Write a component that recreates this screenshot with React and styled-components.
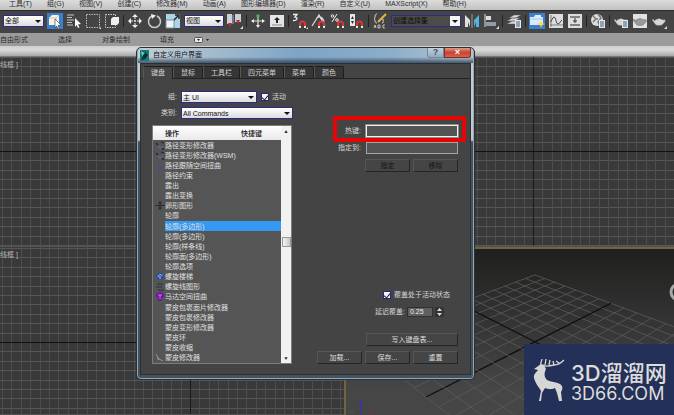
import { useState } from "react";
import styled, { createGlobalStyle, css } from "styled-components";

const GlobalStyle = createGlobalStyle`
  * {
    box-sizing: border-box;
  }
  body {
    margin: 0;
    overflow: hidden;
    background: #3a3a3a;
  }
  body, button, input, select {
    font-family: "Liberation Sans", "Noto Sans CJK SC", sans-serif;
    font-size: 7px;
    line-height: 10px;
  }
`;

const StyledApp = styled.div`
  position: relative;
  display: flex;
  flex-direction: column;
  height: 100vh;
  overflow: hidden;
`;

const MenuBar = styled.nav`
  display: flex;
  gap: 15px;
  height: 10px;
  padding-left: 9px;
  background: linear-gradient(#dcdcdc, #c2c2c2);
  a {
    color: #2c2c2c;
    line-height: 8px;
    text-decoration: none;
    white-space: nowrap;
  }
`;

const ToolBar = styled.div`
  display: flex;
  align-items: center;
  gap: 3px;
  height: 23px;
  padding: 0 3px 3px;
  background: #444;
  border-top: 1px solid #2c2c2c;
`;

const Separator = styled.span`
  width: 1px;
  height: 12px;
  background: #222;
`;

const ToolButton = styled.button`
  flex: none;
  display: flex;
  width: 16px;
  height: 16px;
  padding: 0;
  border: none;
  background: ${(props) => (props.$active ? "#3b7fd0" : "transparent")};
  svg {
    width: 16px;
    height: 16px;
  }
`;

const SelectBox = styled.span`
  position: relative;
  display: flex;
  flex: none;
  width: ${(props) => props.$width};
  height: 12px;
  &::after {
    content: "";
    position: absolute;
    right: 3px;
    top: 5px;
    border: 3px solid transparent;
    border-top-color: #111;
    border-bottom: none;
    pointer-events: none;
  }
  select {
    appearance: none;
    width: 100%;
    padding: 0 1px;
    border: 1px solid #2b2b8c;
    border-radius: 0;
    background: linear-gradient(#fff, #dcdcdc);
    color: #111;
    line-height: 9px;
  }
  ${(props) =>
    props.$dark &&
    css`
      select {
        background: linear-gradient(90deg, #4b4b4b 58px, #f4f4f4 58px);
        color: #0c0c0c;
      }
    `}
`;

const Ribbon = styled.div`
  display: flex;
  align-items: center;
  gap: 30px;
  height: 13px;
  background: #9b9b9b;
  color: #2b2b2b;
  white-space: nowrap;
  div {
    display: flex;
    align-items: center;
    gap: 20px;
  }
  svg {
    width: 16px;
    height: 6px;
  }
`;

const Strip = styled.div`
  height: 11px;
  background: linear-gradient(#cfcfcf, #dadada 40%, #a6a6a6);
  border-bottom: 1px solid #777;
`;

const Viewports = styled.main`
  flex: 1;
  display: grid;
  grid-template-columns: 51% 49%;
  grid-template-rows: 53% 47%;
  min-height: 0;
`;

const Viewport = styled.section`
  position: relative;
  overflow: hidden;
  color: #b5b5b5;
  background: #393939;
  border-bottom: 1px solid #525252;
  svg {
    display: block;
    width: 100%;
    height: 100%;
  }
  span {
    position: absolute;
    left: 0;
    top: 3px;
  }
`;

const Perspective = styled(Viewport)`
  border: 2px solid #6c6641;
  border-right: none;
  border-bottom: none;
  background: linear-gradient(#1f1f1d, #303030 35%, #464646 85%);
`;

const Dialog = styled.div`
  position: absolute;
  left: 136px;
  top: 47px;
  width: 339px;
  padding: 0 3px 4px;
  border: 1px solid #27313a;
  border-radius: 5px;
  background: linear-gradient(#c9ced1 0, #c4c7c9 92px, #46525c 94px, #46525c);
  box-shadow: inset 0 0 0 1px #93a6b3;
`;

const TitleBar = styled.header`
  display: flex;
  align-items: center;
  gap: 4px;
  height: 15px;
  margin: 0 -2px;
  padding: 0 2px 1px;
  border-radius: 4px 4px 0 0;
  background:
    linear-gradient(transparent 60%, rgba(25, 45, 68, 0.65) 95%),
    linear-gradient(90deg, #c3cdd5, #a5bbcd 22%, #7fa4c5 48%, #8cadc8 75%, #b8c5cf);
  h1 {
    flex: 1;
    margin: 0;
    color: #101010;
    font-size: 7px;
    font-weight: 400;
  }
  > svg {
    width: 9px;
    height: 11px;
  }
`;

const WindowButtons = styled.div`
  display: flex;
  align-self: flex-start;
  height: 10px;
`;

const WindowButton = styled.button`
  width: ${(props) => (props.$close ? "27px" : "17px")};
  padding: 0;
  border: 1px solid ${(props) => (props.$close ? "#7a3029" : "#76899a")};
  border-top: none;
  border-radius: ${(props) => (props.$close ? "0 0 3px 0" : "0 0 0 3px")};
  background: ${(props) =>
    props.$close ? "linear-gradient(#dc9a8e, #c9432f 50%, #d4644c)" : "linear-gradient(#c3d1dc, #93abc0)"};
  color: ${(props) => (props.$close ? "#fff" : "#46505a")};
  font-size: 9px;
  font-weight: 700;
  line-height: 9px;
`;

const Client = styled.div`
  background: #444;
  border: 1px solid #2a2f33;
  color: #d6d6d6;
`;

const Tabs = styled.div`
  display: flex;
  height: 15px;
  padding: 2px 0 0 2px;
  border-bottom: 1px solid #222;
  background: #444;
`;

const Tab = styled.button`
  height: ${(props) => (props.$active ? "13px" : "12px")};
  padding: 0 7px;
  border: 1px solid #1f1f1f;
  border-left-color: #555;
  border-bottom: none;
  border-radius: 2px 2px 0 0;
  background: ${(props) => (props.$active ? "#444" : "#363636")};
  color: #d0d0d0;
`;

const Panel = styled.div`
  display: flex;
  justify-content: space-between;
  padding: 12px 12px 10px 11px;
`;

const Column = styled.div`
  display: flex;
  flex-direction: column;
`;

const SideColumn = styled(Column)`
  justify-content: space-between;
  align-items: flex-end;
  padding-top: 34px;
`;

const FormRow = styled.div`
  display: flex;
  align-items: center;
  gap: 4px;
  height: 12px;
  margin-bottom: 4px;
  > label:first-child {
    width: 25px;
    text-align: right;
  }
`;

const CheckLabel = styled.label`
  display: flex;
  align-items: center;
  gap: 3px;
  input {
    appearance: none;
    display: grid;
    place-items: center;
    width: 8px;
    height: 8px;
    margin: 0;
    border: 1px solid #27277c;
    background: #f4f4f4;
  }
  input:checked::after {
    content: "";
    width: 3px;
    height: 5px;
    border: solid #1d1d50;
    border-width: 0 1px 1px 0;
    transform: rotate(40deg);
  }
`;

const ListBox = styled.div`
  display: flex;
  width: 140px;
  height: 239px;
  margin-top: 2px;
  border: 1px solid #7c7c7c;
  background: #555;
`;

const CommandTable = styled.table`
  flex: 1;
  height: 237px;
  border-collapse: collapse;
  table-layout: fixed;
  th,
  td {
    padding: 0;
    text-align: left;
    white-space: nowrap;
    line-height: 9px;
  }
  th {
    height: 14px;
    background: linear-gradient(#fff, #e9e9e9);
    color: #111;
    font-weight: 500;
  }
  th:first-child {
    width: 12px;
  }
  th:last-child {
    width: 40px;
  }
  td {
    color: #e0e0e0;
  }
  svg {
    display: block;
    width: 10px;
    height: 9px;
    margin-left: 2px;
  }
`;

const CommandRow = styled.tr`
  cursor: pointer;
  td:not(:first-child) {
    background: ${(props) => (props.$selected ? "#3399f3" : "transparent")};
  }
`;

const ScrollBar = styled.div`
  display: flex;
  flex-direction: column;
  justify-content: space-between;
  align-items: center;
  width: 10px;
  background: #f1f1f1;
  button {
    width: 10px;
    height: 10px;
    padding: 0;
    border: none;
    background: transparent;
    color: #222;
    font-size: 5px;
  }
  span {
    width: 9px;
    height: 10px;
    margin-bottom: 6px;
    border: 1px solid #9a9a9a;
    background: linear-gradient(90deg, #f2f2f2, #c8c8c8);
  }
`;

const Field = styled.div`
  position: relative;
  display: flex;
  align-items: center;
  justify-content: flex-end;
  gap: 5px;
  width: 120px;
  margin-bottom: 5px;
  input {
    width: 92px;
    height: 12px;
    padding: 0 2px;
    border: 1px solid ${(props) => (props.$highlight ? "#f2f2f2" : "#a5a5a5")};
    outline: ${(props) => (props.$highlight ? "1px solid #8c8c8c" : "none")};
    background: #545454;
    color: #eee;
  }
  ${(props) =>
    props.$highlight &&
    css`
      &::after {
        content: "";
        position: absolute;
        inset: -9px -8px -5px -5px;
        border: 4px solid #e60505;
        pointer-events: none;
      }
    `}
`;

const ButtonRow = styled.div`
  display: flex;
  justify-content: flex-end;
  gap: 3px;
  margin-top: 5px;
`;

const Button = styled.button`
  width: ${(props) => (props.$wide ? "92px" : "45px")};
  height: 13px;
  padding: 0;
  border: 1px solid;
  border-color: #565656 #252525 #252525 #565656;
  background: #454545;
  color: #dedede;
  &:disabled {
    color: #151515;
  }
`;

const Override = styled.div`
  display: flex;
  flex-direction: column;
  gap: 7px;
  width: 75px;
  margin-left: auto;
  margin-bottom: 16px;
  > label {
    white-space: nowrap;
  }
`;

const Spinner = styled.div`
  display: flex;
  align-items: center;
  gap: 2px;
  margin-left: -8px;
  white-space: nowrap;
  input {
    width: 26px;
    height: 10px;
    padding: 0 2px;
    border: 1px solid #303030;
    background: #606060;
    color: #eee;
  }
  svg {
    width: 9px;
    height: 10px;
  }
`;

const Watermark = styled.aside`
  position: absolute;
  right: 0;
  bottom: 0;
  display: flex;
  align-items: center;
  gap: 3px;
  width: 150px;
  height: 71px;
  padding-left: 8px;
  background: #233057;
  color: #dcdcdc;
  svg {
    width: 36px;
    height: 46px;
  }
  div {
    display: flex;
    flex-direction: column;
    padding-top: 5px;
  }
  strong,
  small {
    white-space: nowrap;
  }
  strong {
    font: 500 22px/24px Inter, "Noto Sans CJK SC", sans-serif;
  }
  small {
    font: 400 18px/18px Inter, sans-serif;
  }
`;

const menus = [
  "工具(T)",
  "组(G)",
  "视图(V)",
  "创建(C)",
  "修改器(M)",
  "动画(A)",
  "图形编辑器(D)",
  "渲染(R)",
  "自定义(U)",
  "MAXScript(X)",
  "帮助(H)",
];

const tabs = ["键盘", "鼠标", "工具栏", "四元菜单", "菜单", "颜色"];

const commands = [
  { name: "路径变形修改器", icon: "path" },
  { name: "路径变形修改器(WSM)", icon: "path" },
  { name: "路径跟随空间扭曲", icon: "follow" },
  { name: "路径约束" },
  { name: "露出" },
  { name: "露出变换" },
  { name: "卵形图形", icon: "cross" },
  { name: "轮廓" },
  { name: "轮廓(多边形)" },
  { name: "轮廓(多边形)" },
  { name: "轮廓(样条线)" },
  { name: "轮廓面(多边形)" },
  { name: "轮廓选项" },
  { name: "螺旋楼梯", icon: "stairs" },
  { name: "螺旋线图形", icon: "helix" },
  { name: "马达空间扭曲", icon: "motor" },
  { name: "蒙皮包裹面片修改器" },
  { name: "蒙皮包裹修改器" },
  { name: "蒙皮变形修改器" },
  { name: "蒙皮环" },
  { name: "蒙皮收缩" },
  { name: "蒙皮修改器", icon: "skin" },
];

const rowIcons = {
  path: (
    <g fill="none" strokeWidth="1.3">
      <path d="M1 2l2 2M6 1l3 1" stroke="#262636" />
      <path d="M3 5l2 2 3-2" stroke="#67628c" />
      <path d="M7 8h2" stroke="#222" />
    </g>
  ),
  follow: <path d="M1 6c2 3 6 2 7-1M3 3l2-1" fill="none" stroke="#5b4384" strokeWidth="1.4" />,
  cross: <path d="M5 0v9M0 4.500h10M3 2h4M3 7h4" fill="none" stroke="#2b2b2b" strokeWidth="1.2" />,
  stairs: (
    <g>
      <circle cx="5" cy="4.500" r="3.500" fill="#274da0" />
      <path d="M3 5c0-3 4-3 4-1M5 4v3" fill="none" stroke="#a6c5ff" />
    </g>
  ),
  helix: <path d="M2 2h6M1 5h6M3 8h6" fill="none" stroke="#303030" />,
  motor: (
    <g>
      <path d="M1 2l4-2 4 2v3l-2 1v3H3V6L1 5z" fill="#7613a6" />
      <path d="M3 3h4M5 3v4" stroke="#c47be3" />
    </g>
  ),
  skin: <path d="M1 1l3 5 4 2M2 5l2 2" fill="none" stroke="#a98ba8" />,
};

const Magnet = () => (
  <g fill="none" strokeWidth="2">
    <path d="M8 14v-3a2.500 2.500 0 0 1 5 0v3" stroke="#e03434" />
    <path d="M8 13v2M13 13v2" stroke="#e8e8e8" />
  </g>
);

const Teapot = ({ color = "#d6d6d6" }) => (
  <path
    d="M4 7c1-1 2-1 3-1l1-1 1 1c1 0 2 0 3 1 2-1 3 0 2 2l-2 2c-1 2-7 2-8 0L1 7l1-1 2 2z"
    fill={color}
    stroke="#555"
    strokeWidth=".4"
  />
);

const Sheet = () => (
  <g>
    <path d="M9 7h6v8H9z" fill="#e8e8e8" />
    <path d="M10 9h4M10 11h4M10 13h4" stroke="#345c91" />
  </g>
);

const toolIcons = {
  选择对象: (
    <g>
      <path d="M2 5l3-3h7v7l-3 3H2z" fill="#f3f3e8" />
      <path d="M2 5h7v7M9 5l3-3" fill="none" stroke="#c3c7bd" />
      <path d="M8 6l6 6-3 .4 1.500 3-1.500.6-1.300-3L8 15z" fill="#fff" stroke="#333" strokeWidth=".6" />
    </g>
  ),
  按名称选择: (
    <g>
      <path d="M1 2h7M1 4.500h5M1 7h7M1 9.500h5M1 12h6" stroke="#c4c4c4" />
      <path d="M9 5l6 6-3 .4 1.500 3-1.500.6-1.300-3L9 14z" fill="#fff" />
    </g>
  ),
  矩形选择区域: (
    <g>
      <rect x="1.500" y="1.500" width="13" height="13" fill="none" stroke="#bbb" strokeDasharray="1.500 1" />
      <path d="M16 14v2h-2z" fill="#ddd" />
    </g>
  ),
  窗口交叉: (
    <g>
      <rect x="1.500" y="1.500" width="10" height="13" fill="none" stroke="#ccc" strokeDasharray="1.500 1" />
      <path d="M7 6l2-2h6v6l-2 2H7z" fill="#eee" />
    </g>
  ),
  选择并移动: (
    <g fill="#eee">
      <path d="M8 1l3 3H5zM8 15l3-3H5zM1 8l3-3v6zM15 8l-3-3v6z" />
      <path d="M8 4v8M4 8h8" stroke="#eee" strokeDasharray="2 1" />
    </g>
  ),
  选择并旋转: (
    <g>
      <path d="M6 3a6 6 0 1 0 5 0" fill="none" stroke="#ccc" strokeWidth="1.500" />
      <path d="M5 1l5 1.500-4 3.500z" fill="#eee" />
    </g>
  ),
  选择并缩放: (
    <g>
      <path d="M1 1h14v14H1z" fill="#a9d4ea" />
      <path d="M1 7h8v8H1z" fill="#f3f3f3" stroke="#6d93a6" />
      <path d="M9 7l4-4M10 2h4v4" fill="none" stroke="#222" strokeWidth="1.400" />
    </g>
  ),
  使用轴点中心: (
    <g>
      <path d="M0 1h5v10H0zM8 1h6v8H8z" fill="#cbd0d4" />
      <path d="M5 2h2v9H5z" fill="#687888" />
      <path d="M1 10h4l-2 4zM9 7h4l-2 4z" fill="#c92828" />
      <path d="M16 13v3h-3z" fill="#ddd" />
    </g>
  ),
  选择并操纵: (
    <g>
      <path d="M8 2v12M2 8h12" stroke="#ddd" strokeWidth="1.200" />
      <circle cx="8" cy="3" r="1.700" fill="#4fb44f" />
      <path d="M1 8l3-2v4zM15 8l-3-2v4zM8 15l-2-3h4z" fill="#eee" />
    </g>
  ),
  键盘快捷键覆盖: (
    <g>
      <rect x="1" y="2" width="14" height="12" fill="#e5e5e5" />
      <path d="M8 4l3 3H9v3H7V7H5z" fill="#222" />
      <path d="M3 12h10" stroke="#888" />
    </g>
  ),
  捕捉开关: (
    <g>
      <path d="M1 1.500h4L3 4c3 0 3 4-2 3.500" fill="none" stroke="#eee" strokeWidth="1.300" />
      <Magnet />
      <path d="M16 14v2h-2z" fill="#ddd" />
    </g>
  ),
  角度捕捉: (
    <g>
      <path d="M1 13L8 2l6 11M5 6c3-4 7-2 8 3" fill="none" stroke="#ddd" strokeWidth="1.200" />
      <Magnet />
    </g>
  ),
  百分比捕捉: (
    <g>
      <circle cx="2.500" cy="3" r="1.300" fill="none" stroke="#eee" />
      <circle cx="7" cy="7" r="1.300" fill="none" stroke="#eee" />
      <path d="M7 1L2 9" stroke="#eee" />
      <Magnet />
    </g>
  ),
  微调器捕捉: (
    <g>
      <path d="M1 1h5v12H1z" fill="#e7e7e7" />
      <path d="M2 6l1.500-3L5 6zM2 8l1.500 3L5 8z" fill="#333" />
      <Magnet />
    </g>
  ),
  编辑命名选择集: (
    <g fill="none" stroke="#ddd">
      <path d="M5 1c-3 0-1 4-3 5 2 1 0 4 3 4M10 10c2 0 1-2 1-4" />
      <path d="M6 9l8-8" stroke="#e5bd3e" strokeWidth="2" />
      <path d="M2 15l1-3 1 3M6 12v3h2v-3zM13 12h-2v3h2" strokeWidth=".8" />
    </g>
  ),
  镜像: (
    <g>
      <path d="M1 2l5 5v7L4 9v5H1z" fill="#e0e0e0" />
      <path d="M15 2l-5 5v7l2-5v5h3z" fill="#52b4df" />
      <path d="M8 1v14" stroke="#999" />
    </g>
  ),
  对齐: (
    <g>
      <path d="M2 1v13" stroke="#ddd" />
      <path d="M3 3h5v4H3z" fill="#ddd" />
      <path d="M3 9h10v4H3z" fill="#929da8" />
      <path d="M16 13v3h-3z" fill="#ddd" />
    </g>
  ),
  层管理器: (
    <g>
      <path d="M1 11l5-3h8l-5 3zM1 8l5-3h8l-5 3zM3 5l5-3h7l-5 3z" fill="#dcdcdc" stroke="#555" strokeWidth=".5" />
      <Sheet />
    </g>
  ),
  功能区: (
    <g>
      <path d="M1 4h4l1-2h6v2h2v8H1z" fill="#dbe9f8" />
      <path d="M1 6h13" stroke="#a9c8e7" />
      <path d="M12 8l1 2 3 1-3 1-1 3-1-3-3-1 3-1z" fill="#ffd83a" />
    </g>
  ),
  曲线编辑器: (
    <g>
      <path d="M1 1h14v14H1z" fill="#ddd" />
      <path d="M3 2v12M2 12h13" stroke="#555" strokeWidth=".7" />
      <path d="M2 9c2 0 2-5 4-5s2 7 4 7 2-3 4-4" fill="none" stroke="#444" />
    </g>
  ),
  图解视图: (
    <g>
      <path d="M1 1h14v14H1z" fill="#dedede" />
      <path d="M3 4h10M3 12h10" stroke="#666" strokeWidth="1.500" />
      <path d="M8 5v5M6 8h4" stroke="#333" />
    </g>
  ),
  材质编辑器: (
    <g>
      <circle cx="7" cy="7" r="6" fill="#ddd" />
      <path d="M3 3l3 3-3 3M8 1l3 4-3 4 2 4M6 6h2" fill="none" stroke="#777" strokeWidth="1.500" />
      <Sheet />
    </g>
  ),
  渲染设置: (
    <g>
      <Teapot />
      <Sheet />
    </g>
  ),
  渲染帧窗口: (
    <g>
      <path d="M1 1h14v14H1z" fill="#e2e2e2" />
      <Teapot color="#999" />
    </g>
  ),
  渲染产品: (
    <g>
      <Teapot />
      <path d="M16 13v3h-3z" fill="#ddd" />
    </g>
  ),
};

function Tool({ name, active }) {
  return (
    <ToolButton type="button" aria-label={name} $active={active}>
      <svg viewBox="0 0 16 16">{toolIcons[name]}</svg>
    </ToolButton>
  );
}

// Orthographic viewport grid, the axes are drawn in black
function FlatGrid({ axisX, axisY }) {
  const step = 9.4;
  const lines = [];
  for (let i = -60; i <= 60; i++) {
    if (i === 0) continue;
    const x = Math.round(axisX + i * step);
    const y = Math.round(axisY + i * step);
    if (x >= 0) lines.push(<rect key={`x${i}`} x={x} y="0" width="1" height="100%" fill="#4d4d4d" />);
    if (y >= 0) lines.push(<rect key={`y${i}`} x="0" y={y} width="100%" height="1" fill="#565656" />);
  }
  return (
    <svg>
      {lines}
      <rect x={axisX} y="0" width="1" height="100%" fill="#1b1b1b" />
      <rect x="0" y={axisY} width="100%" height="1" fill="#121212" />
    </svg>
  );
}

function project(u, v) {
  const depth = 39.3 - (u + v);
  return [189 + (503 * (u - v)) / depth, 10015 / depth - 162];
}

function GroundGrid() {
  const lines = [];
  for (let i = -7; i <= 7; i++) {
    const ends = [
      [project(i, -7), project(i, 7)],
      [project(-7, i), project(7, i)],
    ];
    ends.forEach(([a, b], n) =>
      lines.push(
        <line
          key={`${i}-${n}`}
          x1={a[0]}
          y1={a[1]}
          x2={b[0]}
          y2={b[1]}
          stroke={i === 0 ? "#0d0d0d" : "#5b5b5b"}
          strokeWidth={i === 0 ? 1.2 : 0.8}
        />
      )
    );
  }
  return (
    <svg>
      {lines}
      <circle cx="333" cy="43" r="8" fill="none" stroke="#a5a9aa" strokeWidth="3" />
      <path d="M15 156v14" stroke="#3030a8" />
      <path d="M13 152h3l-3 3h3" fill="none" stroke="#3434c0" />
      <path d="M4 161l3 3M7 161l-3 3" stroke="#267326" />
      <path d="M24 161l3 3M27 161l-3 3" stroke="#8b3030" />
    </svg>
  );
}

function Deer() {
  return (
    <svg viewBox="0 0 36 46">
      <path
        d="M2 12l7-5 3 1 2 4c-2 4-2 8 1 11 4 2 9 2 13 4 3 2 3 5 1 8l1 9h-3l-2-8-2-5c-4 2-7 1-10 0l-3 5-1 8H7l2-10c-2-4-6-8-7-13-1-4 3-6 4-8z"
        fill="#d6d6d6"
      />
      <path
        d="M9 8C8 5 10 4 10 2M11 8c2 2 7 1 11 0 4 0 7-2 10-5M13 8l1-6M17 8l1-5M22 8l-1-4M27 6l-3-2"
        fill="none"
        stroke="#d6d6d6"
        strokeWidth="1.300"
      />
    </svg>
  );
}

function CustomizeDialog() {
  const [tab, setTab] = useState("键盘");
  const [selected, setSelected] = useState(8);

  return (
    <Dialog role="dialog" aria-labelledby="dialog-title">
      <TitleBar>
        <svg viewBox="0 0 9 11">
          <path d="M0 0h9v11H0z" fill="#147b78" />
          <path d="M1 1l4 1 3 3-3 4-4 1 2-4z" fill="#062f35" />
          <path d="M1 1l4 2-3 3z" fill="#66d0bd" />
        </svg>
        <h1 id="dialog-title">自定义用户界面</h1>
        <WindowButtons>
          <WindowButton type="button">?</WindowButton>
          <WindowButton type="button" $close>
            ×
          </WindowButton>
        </WindowButtons>
      </TitleBar>
      <Client>
        <Tabs role="tablist">
          {tabs.map((name) => (
            <Tab key={name} role="tab" aria-selected={tab === name} $active={tab === name} onClick={() => setTab(name)}>
              {name}
            </Tab>
          ))}
        </Tabs>
        <Panel>
          <Column>
            <FormRow>
              <label htmlFor="group">组:</label>
              <SelectBox $width="76px">
                <select id="group">
                  <option>主 UI</option>
                </select>
              </SelectBox>
              <CheckLabel>
                <input type="checkbox" defaultChecked />
                活动
              </CheckLabel>
            </FormRow>
            <FormRow>
              <label htmlFor="category">类别:</label>
              <SelectBox $width="112px">
                <select id="category">
                  <option>All Commands</option>
                </select>
              </SelectBox>
            </FormRow>
            <ListBox>
              <CommandTable>
                <thead>
                  <tr>
                    <th></th>
                    <th>操作</th>
                    <th>快捷键</th>
                  </tr>
                </thead>
                <tbody>
                  {commands.map((command, index) => (
                    <CommandRow key={index} $selected={index === selected} onClick={() => setSelected(index)}>
                      <td>{command.icon && <svg viewBox="0 0 10 9">{rowIcons[command.icon]}</svg>}</td>
                      <td>{command.name}</td>
                      <td></td>
                    </CommandRow>
                  ))}
                </tbody>
              </CommandTable>
              <ScrollBar>
                <button type="button">▲</button>
                <span />
                <button type="button">▼</button>
              </ScrollBar>
            </ListBox>
          </Column>
          <SideColumn>
            <div>
              <Field $highlight>
                <label htmlFor="hotkey">热键:</label>
                <input id="hotkey" type="text" />
              </Field>
              <Field>
                <label htmlFor="assigned">指定到:</label>
                <input id="assigned" type="text" readOnly />
              </Field>
              <ButtonRow>
                <Button disabled>指定</Button>
                <Button disabled>移除</Button>
              </ButtonRow>
            </div>
            <div>
              <Override>
                <CheckLabel>
                  <input type="checkbox" defaultChecked />
                  覆盖处于活动状态
                </CheckLabel>
                <Spinner>
                  <label htmlFor="delay">延迟覆盖:</label>
                  <input id="delay" type="text" defaultValue="0.25" />
                  <svg viewBox="0 0 9 10">
                    <path d="M0 0h9v10H0z" fill="#333" />
                    <path d="M2 4l2.500-3L7 4zM2 6l2.500 3L7 6z" fill="#ddd" />
                  </svg>
                </Spinner>
              </Override>
              <ButtonRow>
                <Button $wide>写入键盘表...</Button>
              </ButtonRow>
              <ButtonRow>
                <Button>加载...</Button>
                <Button>保存...</Button>
                <Button>重置</Button>
              </ButtonRow>
            </div>
          </SideColumn>
        </Panel>
      </Client>
    </Dialog>
  );
}

export default function App() {
  return (
    <StyledApp>
      <GlobalStyle />
      <MenuBar>
        {menus.map((menu) => (
          <a key={menu} href="#">
            {menu}
          </a>
        ))}
      </MenuBar>
      <ToolBar>
        <SelectBox $width="41px">
          <select aria-label="选择过滤器">
            <option>全部</option>
          </select>
        </SelectBox>
        <Tool name="选择对象" active />
        <Tool name="按名称选择" />
        <Tool name="矩形选择区域" />
        <Tool name="窗口交叉" />
        <Separator />
        <Tool name="选择并移动" />
        <Tool name="选择并旋转" />
        <Tool name="选择并缩放" />
        <SelectBox $width="40px">
          <select aria-label="参考坐标系">
            <option>视图</option>
          </select>
        </SelectBox>
        <Tool name="使用轴点中心" />
        <Separator />
        <Tool name="选择并操纵" />
        <Tool name="键盘快捷键覆盖" />
        <Separator />
        <Tool name="捕捉开关" />
        <Tool name="角度捕捉" />
        <Tool name="百分比捕捉" />
        <Tool name="微调器捕捉" />
        <Separator />
        <Tool name="编辑命名选择集" />
        <SelectBox $width="70px" $dark>
          <select aria-label="命名选择集">
            <option>创建选择集</option>
          </select>
        </SelectBox>
        <Tool name="镜像" />
        <Tool name="对齐" />
        <Separator />
        <Tool name="层管理器" />
        <Separator />
        <Tool name="功能区" active />
        <Tool name="曲线编辑器" />
        <Tool name="图解视图" />
        <Separator />
        <Tool name="材质编辑器" />
        <Separator />
        <Tool name="渲染设置" />
        <Tool name="渲染帧窗口" />
        <Tool name="渲染产品" />
      </ToolBar>
      <Ribbon>
        <span>自由形式</span>
        <span>选择</span>
        <span>对象绘制</span>
        <div>
          <span>填充</span>
          <svg viewBox="0 0 16 6">
            <rect x=".5" y=".5" width="8" height="5" rx="1" fill="#e8e8e8" stroke="#555" />
            <path d="M3 2h3L4.500 4zM12 2h3l-1.500 2z" fill="#222" />
          </svg>
        </div>
      </Ribbon>
      <Strip />
      <Viewports>
        <Viewport>
          <FlatGrid axisX={190} axisY={94} />
          <span>线框 ]</span>
        </Viewport>
        <Viewport>
          <FlatGrid axisX={189} axisY={94} />
        </Viewport>
        <Viewport>
          <FlatGrid axisX={190} axisY={95} />
          <span>线框 ]</span>
        </Viewport>
        <Perspective>
          <GroundGrid />
        </Perspective>
      </Viewports>
      <CustomizeDialog />
      <Watermark>
        <Deer />
        <div>
          <strong>3D溜溜网</strong>
          <small>3D66.COM</small>
        </div>
      </Watermark>
    </StyledApp>
  );
}
